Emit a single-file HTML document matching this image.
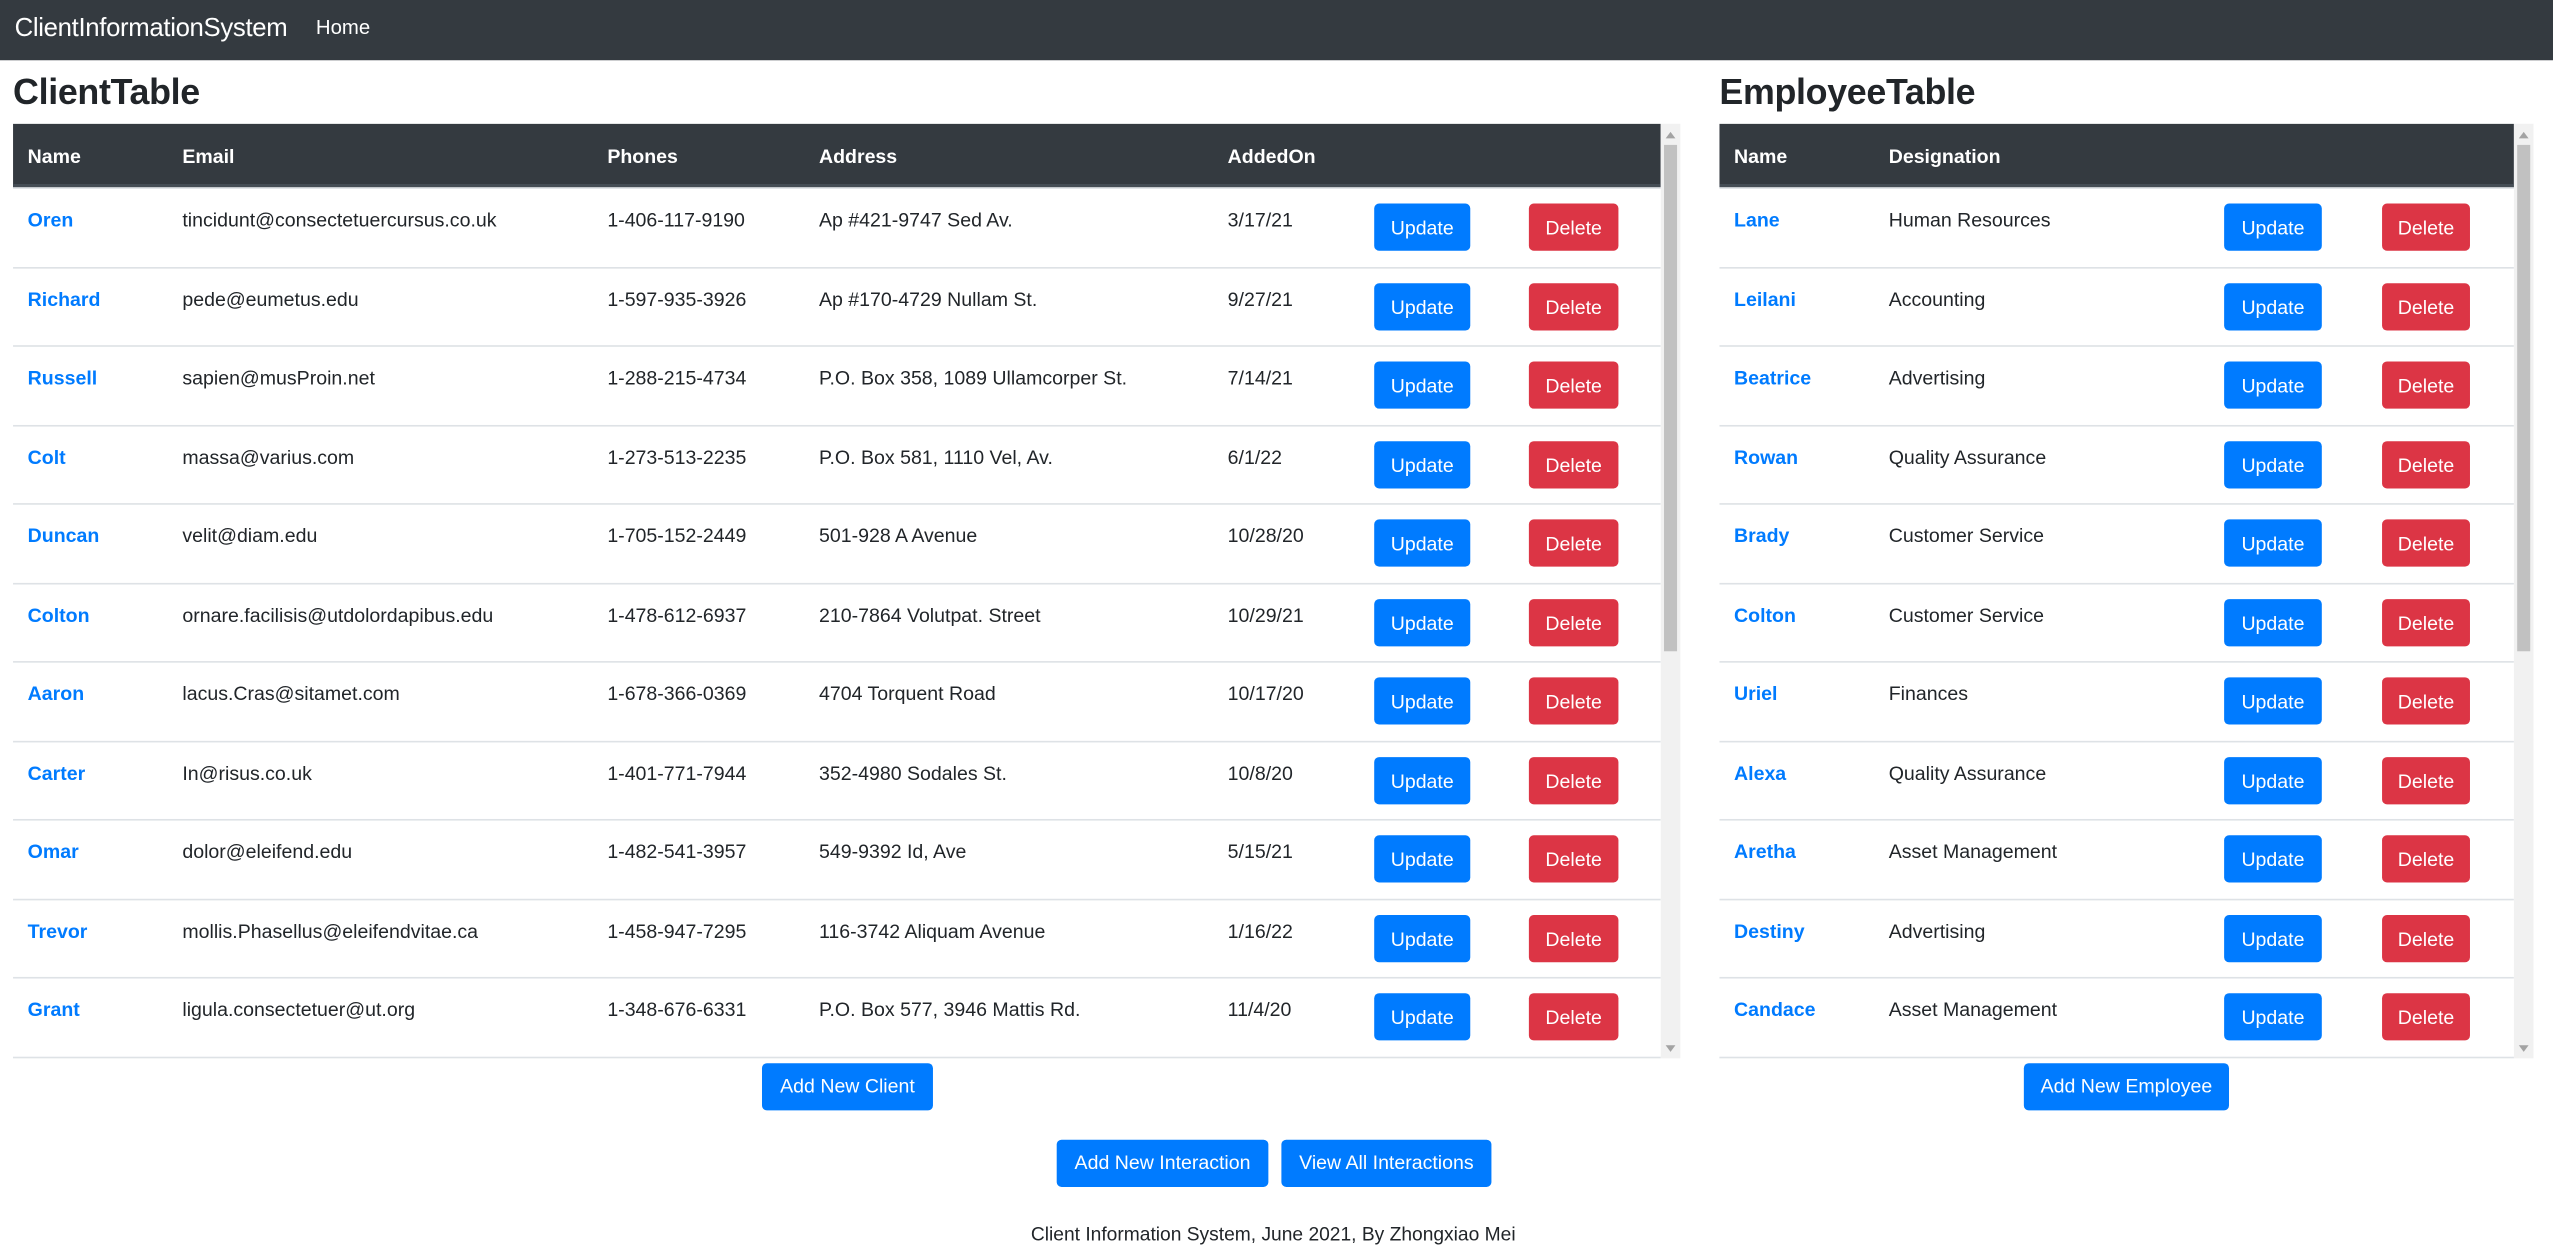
<!DOCTYPE html>
<html><head><meta charset="utf-8"><style>
*{box-sizing:border-box;margin:0;padding:0}
html,body{width:2553px;height:1255px;overflow:hidden;background:#fff}
#w{position:absolute;left:0;top:0;width:1568px;height:771px;transform:scale(1.6282);transform-origin:0 0;font-family:"Liberation Sans",sans-serif;color:#212529;font-size:12px}
.nav{position:absolute;left:0;top:0;width:1568px;height:37px;background:#343a40;color:#fff}
.brand{position:absolute;left:9px;top:9px;font-size:15.8px;letter-spacing:-0.2px}
.home{position:absolute;left:194px;top:10px;font-size:12.5px}
h2{position:absolute;font-weight:bold;font-size:22px;top:44px;letter-spacing:-0.2px}
.box{position:absolute;top:76px;height:574px;overflow:hidden;border-bottom:1px solid #dee2e6}
.hd{position:absolute;left:0;top:0;height:39px;background:#343a40;color:#fff;font-weight:bold;font-size:12px;border-bottom:2px solid #454d55}
.hd span,.r span{position:absolute;top:13px}
.r{position:absolute;left:0;height:48.5px;border-top:1px solid #dee2e6}
.r span{top:12px}
.r .n{color:#007bff;font-weight:bold}
.b{position:absolute;top:9px;height:29px;border-radius:3px;color:#fff;font-size:12px;text-align:center;line-height:30px}
.u{background:#007bff}.d{background:#dc3545}
.sb{position:absolute;top:76px;width:12px;height:574px;background:#f1f1f1}
.sb i{position:absolute;left:2px;top:13px;width:8px;height:311px;background:#c1c1c1}
.sb:before{content:"";position:absolute;left:3px;top:5px;border:3px solid transparent;border-bottom:4px solid #a3a3a3;border-top:0}
.sb:after{content:"";position:absolute;left:3px;bottom:4px;border:3px solid transparent;border-top:4px solid #a3a3a3;border-bottom:0}
.btn{position:absolute;background:#007bff;color:#fff;border-radius:3px;text-align:center;font-size:12px}
.ft{position:absolute;top:751px;left:0;width:1564px;text-align:center;font-size:11.8px}
</style></head><body><div id="w">
<div class="nav"><div class="brand">ClientInformationSystem</div><div class="home">Home</div></div>
<h2 style="left:8px">ClientTable</h2>
<h2 style="left:1056px">EmployeeTable</h2>

<div class="box" style="left:8px;width:1012px">
<div class="hd" style="width:1012px"><span style="left:9px">Name</span><span style="left:104px">Email</span><span style="left:365px">Phones</span><span style="left:495px">Address</span><span style="left:746px">AddedOn</span></div>
<div class="r" style="top:39px;width:1012px"><span class="n" style="left:9px">Oren</span><span style="left:104px">tincidunt@consectetuercursus.co.uk</span><span style="left:365px">1-406-117-9190</span><span style="left:495px">Ap #421-9747 Sed Av.</span><span style="left:746px">3/17/21</span><div class="b u" style="left:836px;width:59px">Update</div><div class="b d" style="left:931px;width:55px">Delete</div></div>
<div class="r" style="top:87.5px;width:1012px"><span class="n" style="left:9px">Richard</span><span style="left:104px">pede@eumetus.edu</span><span style="left:365px">1-597-935-3926</span><span style="left:495px">Ap #170-4729 Nullam St.</span><span style="left:746px">9/27/21</span><div class="b u" style="left:836px;width:59px">Update</div><div class="b d" style="left:931px;width:55px">Delete</div></div>
<div class="r" style="top:136px;width:1012px"><span class="n" style="left:9px">Russell</span><span style="left:104px">sapien@musProin.net</span><span style="left:365px">1-288-215-4734</span><span style="left:495px">P.O. Box 358, 1089 Ullamcorper St.</span><span style="left:746px">7/14/21</span><div class="b u" style="left:836px;width:59px">Update</div><div class="b d" style="left:931px;width:55px">Delete</div></div>
<div class="r" style="top:184.5px;width:1012px"><span class="n" style="left:9px">Colt</span><span style="left:104px">massa@varius.com</span><span style="left:365px">1-273-513-2235</span><span style="left:495px">P.O. Box 581, 1110 Vel, Av.</span><span style="left:746px">6/1/22</span><div class="b u" style="left:836px;width:59px">Update</div><div class="b d" style="left:931px;width:55px">Delete</div></div>
<div class="r" style="top:233px;width:1012px"><span class="n" style="left:9px">Duncan</span><span style="left:104px">velit@diam.edu</span><span style="left:365px">1-705-152-2449</span><span style="left:495px">501-928 A Avenue</span><span style="left:746px">10/28/20</span><div class="b u" style="left:836px;width:59px">Update</div><div class="b d" style="left:931px;width:55px">Delete</div></div>
<div class="r" style="top:281.5px;width:1012px"><span class="n" style="left:9px">Colton</span><span style="left:104px">ornare.facilisis@utdolordapibus.edu</span><span style="left:365px">1-478-612-6937</span><span style="left:495px">210-7864 Volutpat. Street</span><span style="left:746px">10/29/21</span><div class="b u" style="left:836px;width:59px">Update</div><div class="b d" style="left:931px;width:55px">Delete</div></div>
<div class="r" style="top:330px;width:1012px"><span class="n" style="left:9px">Aaron</span><span style="left:104px">lacus.Cras@sitamet.com</span><span style="left:365px">1-678-366-0369</span><span style="left:495px">4704 Torquent Road</span><span style="left:746px">10/17/20</span><div class="b u" style="left:836px;width:59px">Update</div><div class="b d" style="left:931px;width:55px">Delete</div></div>
<div class="r" style="top:378.5px;width:1012px"><span class="n" style="left:9px">Carter</span><span style="left:104px">In@risus.co.uk</span><span style="left:365px">1-401-771-7944</span><span style="left:495px">352-4980 Sodales St.</span><span style="left:746px">10/8/20</span><div class="b u" style="left:836px;width:59px">Update</div><div class="b d" style="left:931px;width:55px">Delete</div></div>
<div class="r" style="top:427px;width:1012px"><span class="n" style="left:9px">Omar</span><span style="left:104px">dolor@eleifend.edu</span><span style="left:365px">1-482-541-3957</span><span style="left:495px">549-9392 Id, Ave</span><span style="left:746px">5/15/21</span><div class="b u" style="left:836px;width:59px">Update</div><div class="b d" style="left:931px;width:55px">Delete</div></div>
<div class="r" style="top:475.5px;width:1012px"><span class="n" style="left:9px">Trevor</span><span style="left:104px">mollis.Phasellus@eleifendvitae.ca</span><span style="left:365px">1-458-947-7295</span><span style="left:495px">116-3742 Aliquam Avenue</span><span style="left:746px">1/16/22</span><div class="b u" style="left:836px;width:59px">Update</div><div class="b d" style="left:931px;width:55px">Delete</div></div>
<div class="r" style="top:524px;width:1012px"><span class="n" style="left:9px">Grant</span><span style="left:104px">ligula.consectetuer@ut.org</span><span style="left:365px">1-348-676-6331</span><span style="left:495px">P.O. Box 577, 3946 Mattis Rd.</span><span style="left:746px">11/4/20</span><div class="b u" style="left:836px;width:59px">Update</div><div class="b d" style="left:931px;width:55px">Delete</div></div>
</div>
<div class="sb" style="left:1020px"><i></i></div>

<div class="box" style="left:1056px;width:488px">
<div class="hd" style="width:488px"><span style="left:9px">Name</span><span style="left:104px">Designation</span></div>
<div class="r" style="top:39px;width:488px"><span class="n" style="left:9px">Lane</span><span style="left:104px">Human Resources</span><div class="b u" style="left:310px;width:60px">Update</div><div class="b d" style="left:407px;width:54px">Delete</div></div>
<div class="r" style="top:87.5px;width:488px"><span class="n" style="left:9px">Leilani</span><span style="left:104px">Accounting</span><div class="b u" style="left:310px;width:60px">Update</div><div class="b d" style="left:407px;width:54px">Delete</div></div>
<div class="r" style="top:136px;width:488px"><span class="n" style="left:9px">Beatrice</span><span style="left:104px">Advertising</span><div class="b u" style="left:310px;width:60px">Update</div><div class="b d" style="left:407px;width:54px">Delete</div></div>
<div class="r" style="top:184.5px;width:488px"><span class="n" style="left:9px">Rowan</span><span style="left:104px">Quality Assurance</span><div class="b u" style="left:310px;width:60px">Update</div><div class="b d" style="left:407px;width:54px">Delete</div></div>
<div class="r" style="top:233px;width:488px"><span class="n" style="left:9px">Brady</span><span style="left:104px">Customer Service</span><div class="b u" style="left:310px;width:60px">Update</div><div class="b d" style="left:407px;width:54px">Delete</div></div>
<div class="r" style="top:281.5px;width:488px"><span class="n" style="left:9px">Colton</span><span style="left:104px">Customer Service</span><div class="b u" style="left:310px;width:60px">Update</div><div class="b d" style="left:407px;width:54px">Delete</div></div>
<div class="r" style="top:330px;width:488px"><span class="n" style="left:9px">Uriel</span><span style="left:104px">Finances</span><div class="b u" style="left:310px;width:60px">Update</div><div class="b d" style="left:407px;width:54px">Delete</div></div>
<div class="r" style="top:378.5px;width:488px"><span class="n" style="left:9px">Alexa</span><span style="left:104px">Quality Assurance</span><div class="b u" style="left:310px;width:60px">Update</div><div class="b d" style="left:407px;width:54px">Delete</div></div>
<div class="r" style="top:427px;width:488px"><span class="n" style="left:9px">Aretha</span><span style="left:104px">Asset Management</span><div class="b u" style="left:310px;width:60px">Update</div><div class="b d" style="left:407px;width:54px">Delete</div></div>
<div class="r" style="top:475.5px;width:488px"><span class="n" style="left:9px">Destiny</span><span style="left:104px">Advertising</span><div class="b u" style="left:310px;width:60px">Update</div><div class="b d" style="left:407px;width:54px">Delete</div></div>
<div class="r" style="top:524px;width:488px"><span class="n" style="left:9px">Candace</span><span style="left:104px">Asset Management</span><div class="b u" style="left:310px;width:60px">Update</div><div class="b d" style="left:407px;width:54px">Delete</div></div>
</div>
<div class="sb" style="left:1544px"><i></i></div>

<div class="btn" style="left:468px;top:653px;width:105px;height:29px;line-height:29px">Add New Client</div>
<div class="btn" style="left:1243px;top:653px;width:126px;height:29px;line-height:29px">Add New Employee</div>
<div class="btn" style="left:649px;top:700px;width:130px;height:29px;line-height:29px">Add New Interaction</div>
<div class="btn" style="left:787px;top:700px;width:129px;height:29px;line-height:29px">View All Interactions</div>
<div class="ft">Client Information System, June 2021, By Zhongxiao Mei</div>
</div></body></html>
